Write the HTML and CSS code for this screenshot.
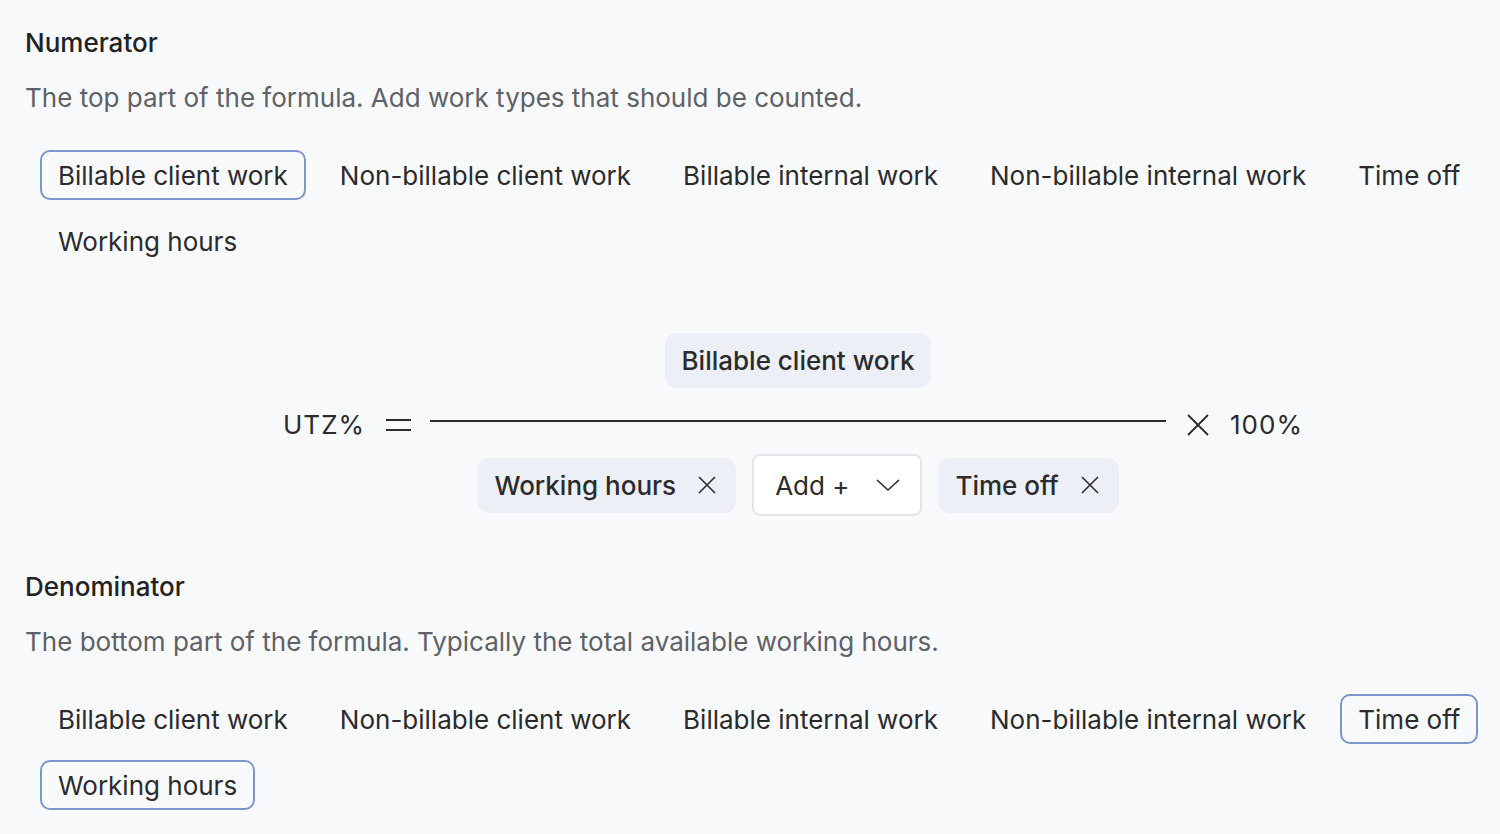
FILE: index.html
```html
<!DOCTYPE html>
<html lang="en">
<head>
    <meta charset="UTF-8">
    <meta name="viewport" content="width=device-width, initial-scale=1.0">
    <title>Utilization formula</title>
    <link rel="stylesheet" href="styles.css">
</head>
<body>

<div class="page">

    <h2 class="section-title">Numerator</h2>
    <p class="section-desc">The top part of the formula. Add work types that should be counted.</p>

    <div class="chips">
        <span class="chip selected">Billable client work</span>
        <span class="chip">Non-billable client work</span>
        <span class="chip">Billable internal work</span>
        <span class="chip">Non-billable internal work</span>
        <span class="chip">Time off</span>
        <span class="chip">Working hours</span>
    </div>

    <div class="formula">
        <span class="term">UTZ%</span>
        <svg class="equals" width="25" height="12" viewBox="0 0 25 12"><path d="M0 1H25M0 11H25" stroke="#2b2b2b" stroke-width="1.8" fill="none"/></svg>
        <div class="fraction">
            <div class="fraction-top">
                <span class="tag">Billable client work</span>
            </div>
            <div class="fraction-line"></div>
            <div class="fraction-bottom">
                <span class="tag">Working hours
                    <svg class="tag-remove" width="18" height="18" viewBox="0 0 18 18"><path d="M1 1L17 17M17 1L1 17" stroke="#2b2b2b" stroke-width="1.6" fill="none"/></svg>
                </span>
                <span class="add-select">Add +
                    <svg class="chevron" width="24" height="14" viewBox="0 0 24 14"><path d="M1 2L12 12L23 2" stroke="#2b2b2b" stroke-width="1.6" fill="none"/></svg>
                </span>
                <span class="tag">Time off
                    <svg class="tag-remove" width="18" height="18" viewBox="0 0 18 18"><path d="M1 1L17 17M17 1L1 17" stroke="#2b2b2b" stroke-width="1.6" fill="none"/></svg>
                </span>
            </div>
        </div>
        <svg class="times" width="22" height="22" viewBox="0 0 22 22"><path d="M1 1L21 21M21 1L1 21" stroke="#2b2b2b" stroke-width="1.8" fill="none"/></svg>
        <span class="term">100%</span>
    </div>

    <h2 class="section-title denom">Denominator</h2>
    <p class="section-desc">The bottom part of the formula. Typically the total available working hours.</p>

    <div class="chips">
        <span class="chip">Billable client work</span>
        <span class="chip">Non-billable client work</span>
        <span class="chip">Billable internal work</span>
        <span class="chip">Non-billable internal work</span>
        <span class="chip selected">Time off</span>
        <span class="chip selected">Working hours</span>
    </div>

</div>

</body>
</html>
```

FILE: styles.css
```css
body {
    margin: 0;
    background-color: #f8f9fb;
    font-family: Inter, "Noto Sans", sans-serif;
    color: #2b2b2b;
}

.page {
    padding: 28px 10px 0 25px;
}

.section-title {
    margin: 0;
    font-size: 26px;
    font-weight: 500;
    line-height: 30px;
    color: #222;
}

.section-title.denom {
    margin-top: 56px;
}

.section-desc {
    margin: 25px 0 0 0;
    font-size: 26px;
    line-height: 30px;
    color: #5e6166;
}

.chips {
    display: flex;
    flex-wrap: wrap;
    column-gap: 16px;
    row-gap: 16px;
    margin-top: 37px;
    padding-left: 15px;
}

.chip {
    display: inline-flex;
    align-items: center;
    height: 50px;
    box-sizing: border-box;
    padding: 0 16px;
    border: 2px solid transparent;
    border-radius: 10px;
    font-size: 26px;
}

.chip.selected {
    border-color: #7d95c9;
}

/* formula */
.formula {
    display: flex;
    align-items: center;
    margin-top: 67px;
    margin-left: 258px;
}

.term {
    font-size: 26px;
    letter-spacing: 1px;
}

.equals {
    margin: 0 19px 0 21px;
}

.fraction {
    width: 736px;
    display: flex;
    flex-direction: column;
    align-items: center;
    gap: 32px;
}

.fraction-line {
    width: 100%;
    height: 2px;
    background-color: #2b2b2b;
}

.fraction-bottom {
    display: flex;
    align-items: center;
    gap: 16px;
}

.tag {
    display: inline-flex;
    align-items: center;
    gap: 22px;
    height: 55px;
    box-sizing: border-box;
    padding: 0 20px 0 17px;
    background-color: #eceff6;
    border-radius: 12px;
    font-size: 26px;
    font-weight: 500;
}

.fraction-top .tag {
    padding-right: 17px;
}

.add-select {
    display: inline-flex;
    align-items: center;
    gap: 27px;
    height: 62px;
    box-sizing: border-box;
    padding: 0 20px 0 21px;
    background-color: #ffffff;
    border: 2px solid #e4e5e8;
    border-radius: 8px;
    font-size: 26px;
}

.times {
    margin: 0 21px;
}
```
